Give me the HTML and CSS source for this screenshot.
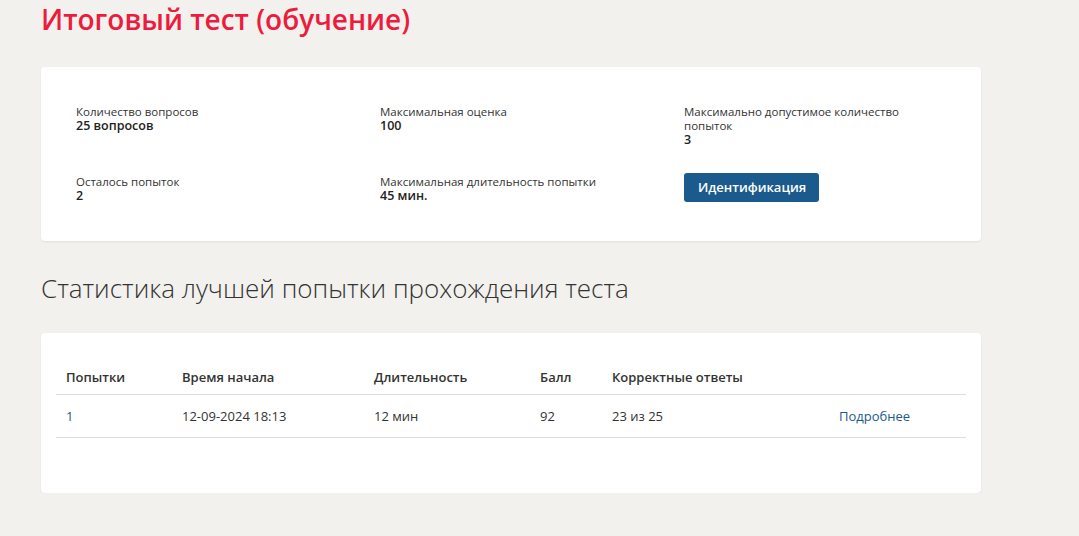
FILE: index.html
```html
<!DOCTYPE html>
<html lang="ru">
<head>
  <meta charset="UTF-8">
  <meta name="viewport" content="width=device-width, initial-scale=1.0">
  <title>Итоговый тест (обучение)</title>
  <link rel="stylesheet" href="styles.css">
</head>
<body>

  <div class="page">
    <h1 class="page-title">Итоговый тест (обучение)</h1>

    <div class="card info-card">
      <div class="info-grid">
        <div class="info-item">
          <div class="info-label">Количество вопросов</div>
          <div class="info-value">25 вопросов</div>
        </div>
        <div class="info-item">
          <div class="info-label">Максимальная оценка</div>
          <div class="info-value">100</div>
        </div>
        <div class="info-item narrow">
          <div class="info-label">Максимально допустимое количество попыток</div>
          <div class="info-value">3</div>
        </div>

        <div class="info-item">
          <div class="info-label">Осталось попыток</div>
          <div class="info-value">2</div>
        </div>
        <div class="info-item">
          <div class="info-label">Максимальная длительность попытки</div>
          <div class="info-value">45 мин.</div>
        </div>
        <div class="info-item">
          <button class="btn-primary">Идентификация</button>
        </div>
      </div>
    </div>

    <h2 class="section-title">Статистика лучшей попытки прохождения теста</h2>

    <div class="card table-card">
      <table class="stats-table">
        <thead>
          <tr>
            <th class="col-num">Попытки</th>
            <th class="col-start">Время начала</th>
            <th class="col-dur">Длительность</th>
            <th class="col-score">Балл</th>
            <th class="col-correct">Корректные ответы</th>
            <th></th>
          </tr>
        </thead>
        <tbody>
          <tr>
            <td><a href="#">1</a></td>
            <td>12-09-2024 18:13</td>
            <td>12 мин</td>
            <td>92</td>
            <td>23 из 25</td>
            <td><a href="#">Подробнее</a></td>
          </tr>
        </tbody>
      </table>
    </div>
  </div>

</body>
</html>
```

FILE: styles.css
```css
body {
  font-family: 'Open Sans', 'Noto Sans', sans-serif;
  background: #f2f1ee;
  color: #333;
  margin: 0;
  padding: 0;
}

.page {
  width: 940px;
  padding: 0 0 0 41px;
}

.page-title {
  color: #ec1c3e;
  font-size: 28px;
  font-weight: 600;
  margin: 0;
  padding-top: 1px;
  line-height: 37px;
}

.card {
  background: #fff;
  border-radius: 4px;
  box-shadow: 0 1px 2px rgba(0,0,0,0.08);
}

.info-card {
  margin-top: 29px;
  padding: 38px 35px 38px;
}

.info-grid {
  display: grid;
  grid-template-columns: 304px 304px 230px;
  row-gap: 28px;
}

.info-label {
  font-size: 11.5px;
  line-height: 14px;
  color: #333;
}

.info-value {
  font-size: 12.5px;
  font-weight: 600;
  line-height: 14px;
  color: #222;
}

.btn-primary {
  font-family: inherit;
  background: #1b5a8c;
  color: #fff;
  border: none;
  border-radius: 3px;
  font-size: 13px;
  font-weight: 600;
  padding: 0 14px;
  height: 29px;
  width: 135px;
  margin-top: -8px;
  cursor: pointer;
}

.section-title {
  font-size: 26px;
  font-weight: 300;
  color: #333;
  margin: 0;
  padding-top: 29px;
  line-height: 36px;
}

.table-card {
  margin-top: 27px;
  padding: 25px 15px 55px;
}

.stats-table {
  width: 100%;
  border-collapse: collapse;
  font-size: 13px;
}

.stats-table th,
.stats-table td {
  text-align: left;
  padding: 0 10px;
  height: 42px;
}

.stats-table th {
  font-weight: 600;
  color: #333;
  height: 35px;
  padding-top: 1px;
  padding-bottom: 0;
  vertical-align: middle;
}

.stats-table thead tr,
.stats-table tbody tr {
  border-bottom: 1px solid #ddd;
}

.stats-table td {
  color: #333;
}

.col-num { width: 96px; }
.col-start { width: 172px; }
.col-dur { width: 146px; }
.col-score { width: 52px; }
.col-correct { width: 207px; }

.stats-table a {
  color: #1b5a8c;
  text-decoration: none;
}

.stats-table a:hover {
  text-decoration: underline;
}
```
